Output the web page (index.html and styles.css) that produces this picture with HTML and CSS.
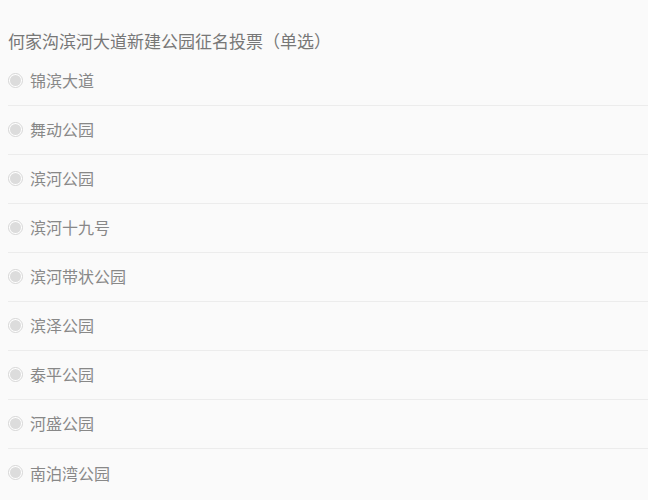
FILE: index.html
```html
<!DOCTYPE html>
<html lang="zh-CN">
<head>
    <meta charset="UTF-8">
    <meta name="viewport" content="width=device-width, initial-scale=1.0">
    <title>公园征名投票</title>
    <link rel="stylesheet" href="styles.css">
</head>
<body>
    <div class="vote">
        <div class="vote-title">何家沟滨河大道新建公园征名投票（单选）</div>
        <ul class="options">
            <li><span class="radio"></span>锦滨大道</li>
            <li><span class="radio"></span>舞动公园</li>
            <li><span class="radio"></span>滨河公园</li>
            <li><span class="radio"></span>滨河十九号</li>
            <li><span class="radio"></span>滨河带状公园</li>
            <li><span class="radio"></span>滨泽公园</li>
            <li><span class="radio"></span>泰平公园</li>
            <li><span class="radio"></span>河盛公园</li>
            <li><span class="radio"></span>南泊湾公园</li>
        </ul>
    </div>
</body>
</html>
```

FILE: styles.css
```css
body, html {
    margin: 0;
    padding: 0;
    background: #fafafa;
    font-family: "Noto Sans CJK SC", "Noto Sans", sans-serif;
    color: #888;
}

.vote {
    padding: 29px 0 0 8px;
}

.vote-title {
    font-size: 17px;
    line-height: 24px;
    color: #777;
    margin-bottom: 4px;
}

.options {
    list-style: none;
    margin: 0;
    padding: 0;
}

.options li {
    box-sizing: border-box;
    display: flex;
    align-items: center;
    height: 49px;
    padding-bottom: 2px;
    border-bottom: 1px solid #ececec;
    font-size: 16px;
}

.options li:last-child {
    border-bottom: none;
}

.radio {
    box-sizing: border-box;
    width: 15px;
    height: 15px;
    border-radius: 50%;
    border: 1px solid #d6d6d6;
    background: #fff;
    margin-right: 7px;
    display: flex;
    align-items: center;
    justify-content: center;
}

.radio::after {
    content: "";
    width: 11px;
    height: 11px;
    border-radius: 50%;
    background: #dcdcdc;
}
```
